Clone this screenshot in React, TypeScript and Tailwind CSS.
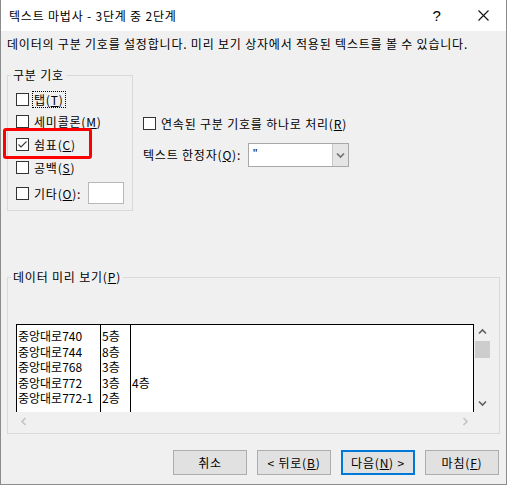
import React from "react";

const Chk = ({ checked }: { checked?: boolean }) => (
  <span className="w-[13px] h-[13px] border border-[#333333] bg-white flex items-center justify-center shrink-0">
    {checked && (
      <svg width="11" height="11" viewBox="0 0 11 11">
        <path d="M1.5 5.5 L4 8 L9.5 2.5" fill="none" stroke="#3a3a3a" strokeWidth="1.1" />
      </svg>
    )}
  </span>
);

const Chev = ({ dir, color }: { dir: "up" | "down" | "left" | "right"; color: string }) => {
  const d =
    dir === "up"
      ? "M1 5.5 L4.5 2 L8 5.5"
      : dir === "down"
      ? "M1 2.5 L4.5 6 L8 2.5"
      : dir === "left"
      ? "M5.5 1 L2 4.5 L5.5 8"
      : "M2.5 1 L6 4.5 L2.5 8";
  return (
    <svg width="9" height="9" viewBox="0 0 9 9">
      <path d={d} fill="none" stroke={color} strokeWidth="1.6" />
    </svg>
  );
};

const Row = ({
  label,
  checked,
  focus,
  className,
  children,
}: {
  label: React.ReactNode;
  checked?: boolean;
  focus?: boolean;
  className?: string;
  children?: React.ReactNode;
}) => (
  <div className={"flex items-center h-[17px] " + (className || "")}>
    <Chk checked={checked} />
    <span
      className={
        "ml-[3px] px-[1px] h-[17px] leading-[15px] border " +
        (focus ? "border-dotted border-black" : "border-transparent")
      }
    >
      {label}
    </span>
    {children}
  </div>
);

const Btn = ({ children, primary }: { children: React.ReactNode; primary?: boolean }) => (
  <div
    className={
      "w-[74px] h-[25px] bg-[#e1e1e1] flex items-center justify-center " +
      (primary ? "border-2 border-[#0078d7]" : "border border-[#adadad]")
    }
  >
    {children}
  </div>
);

const col1 = ["중앙대로740", "중앙대로744", "중앙대로768", "중앙대로772", "중앙대로772-1"];
const col2 = ["5층", "8층", "3층", "3층", "2층"];
const col3 = ["", "", "", "4층", ""];

export default function App() {
  return (
    <div className="relative w-[507px] h-[485px] bg-[#f0f0f0] border-x border-b border-[#8c8c8c] flex flex-col text-[12px] leading-[16px] tracking-[0.8px] text-black font-['Noto_Sans_CJK_KR','Malgun_Gothic',sans-serif] overflow-hidden">
      {/* title bar */}
      <div className="h-[31px] bg-white flex items-center shrink-0">
        <span className="pl-[8px]">텍스트 마법사 - 3단계 중 2단계</span>
        <span className="ml-auto w-[46px] flex justify-center text-[15px] font-['Liberation_Sans',sans-serif]">?</span>
        <span className="w-[46px] flex justify-center">
          <svg width="11" height="11" viewBox="0 0 11 11">
            <path d="M0.5 0.5 L10.5 10.5 M10.5 0.5 L0.5 10.5" stroke="#111" strokeWidth="1.1" />
          </svg>
        </span>
      </div>

      {/* description */}
      <div className="mt-[5px] pl-[6px] h-[16px] whitespace-nowrap">
        데이터의 구분 기호를 설정합니다. 미리 보기 상자에서 적용된 텍스트를 볼 수 있습니다.
      </div>

      {/* middle */}
      <div className="mt-[16px] pl-[6px] flex">
        <fieldset className="w-[126px] border border-[#d9d9d9] px-[8px] pt-[9px] pb-[6px]">
          <legend className="-ml-[5px] px-[2px] leading-[14px]">구분 기호</legend>
          <Row focus label={<>탭(<u>T</u>)</>} />
          <Row className="mt-[5px]" label={<>세미콜론(<u>M</u>)</>} />
          <Row className="mt-[6px]" checked label={<>쉼표(<u>C</u>)</>} />
          <Row className="mt-[6px]" label={<>공백(<u>S</u>)</>} />
          <div className="mt-[6px] flex items-center h-[22px]">
            <Chk />
            <span className="ml-[3px] px-[1px] leading-[15px] border border-transparent">
              기타(<u>O</u>):
            </span>
            <span className="ml-auto w-[36px] h-[22px] bg-white border border-[#b8b8b8]" />
          </div>
        </fieldset>

        <div className="ml-[10px] pt-[47px] flex flex-col">
          <Row label={<>연속된 구분 기호를 하나로 처리(<u>R</u>)</>} />
          <div className="mt-[11px] h-[24px] flex items-center">
            <span className="w-[105px] whitespace-nowrap">
              텍스트 한정자(<u>Q</u>):
            </span>
            <div className="w-[101px] h-[24px] bg-white border border-[#a8a8a8] flex">
              <span className="pl-[4px] leading-[20px] font-['Liberation_Sans',sans-serif]">"</span>
              <span className="ml-auto w-[16px] h-full bg-[#e5e5e5] border-l border-[#c8c8c8] flex items-center justify-center">
                <Chev dir="down" color="#707070" />
              </span>
            </div>
          </div>
        </div>
      </div>

      {/* preview */}
      <fieldset className="mt-[59px] ml-[6px] w-[493px] border border-[#d9d9d9] pl-[8px] pt-[40px] pb-[3px]">
        <legend className="-ml-[5px] px-[2px] leading-[14px]">
          데이터 미리 보기(<u>P</u>)
        </legend>
        <div className="w-[475px] h-[106px] flex">
          <div className="w-[458px] flex flex-col">
            <div className="h-[88px] bg-white border-l border-t border-r border-black flex leading-[15.5px] tracking-normal font-['Noto_Sans_CJK_KR',sans-serif]">
              <div className="w-[84px] border-r border-black pt-[3px] pl-[1px]">
                {col1.map((t, i) => (
                  <div key={i}>{t}</div>
                ))}
              </div>
              <div className="w-[30px] border-r border-black pt-[3px] pl-[1px]">
                {col2.map((t, i) => (
                  <div key={i}>{t}</div>
                ))}
              </div>
              <div className="flex-1 pt-[3px] pl-[1px]">
                {col3.map((t, i) => (
                  <div key={i} className="h-[15.5px]">
                    {t}
                  </div>
                ))}
              </div>
            </div>
            <div className="h-[18px] flex items-center justify-between px-[4px]">
              <Chev dir="left" color="#c4c4c4" />
              <Chev dir="right" color="#c4c4c4" />
            </div>
          </div>
          <div className="w-[17px] flex flex-col items-center">
            <div className="h-[17px] flex items-center justify-center">
              <Chev dir="up" color="#606060" />
            </div>
            <div className="w-[15px] h-[17px] bg-[#cdcdcd]" />
            <div className="flex-1" />
            <div className="h-[17px] flex items-center justify-center">
              <Chev dir="down" color="#606060" />
            </div>
            <div className="h-[18px]" />
          </div>
        </div>
      </fieldset>

      {/* buttons */}
      <div className="mt-[16px] flex justify-end gap-[10px] pr-[7px]">
        <Btn>취소</Btn>
        <Btn>
          &lt; 뒤로(<u>B</u>)
        </Btn>
        <Btn primary>
          다음(<u>N</u>) &gt;
        </Btn>
        <Btn>
          마침(<u>F</u>)
        </Btn>
      </div>

      {/* red annotation */}
      <div className="absolute left-[2px] top-[128px] w-[89px] h-[31px] border-[3px] border-[#ff0000] rounded-[3px]" />
    </div>
  );
}
